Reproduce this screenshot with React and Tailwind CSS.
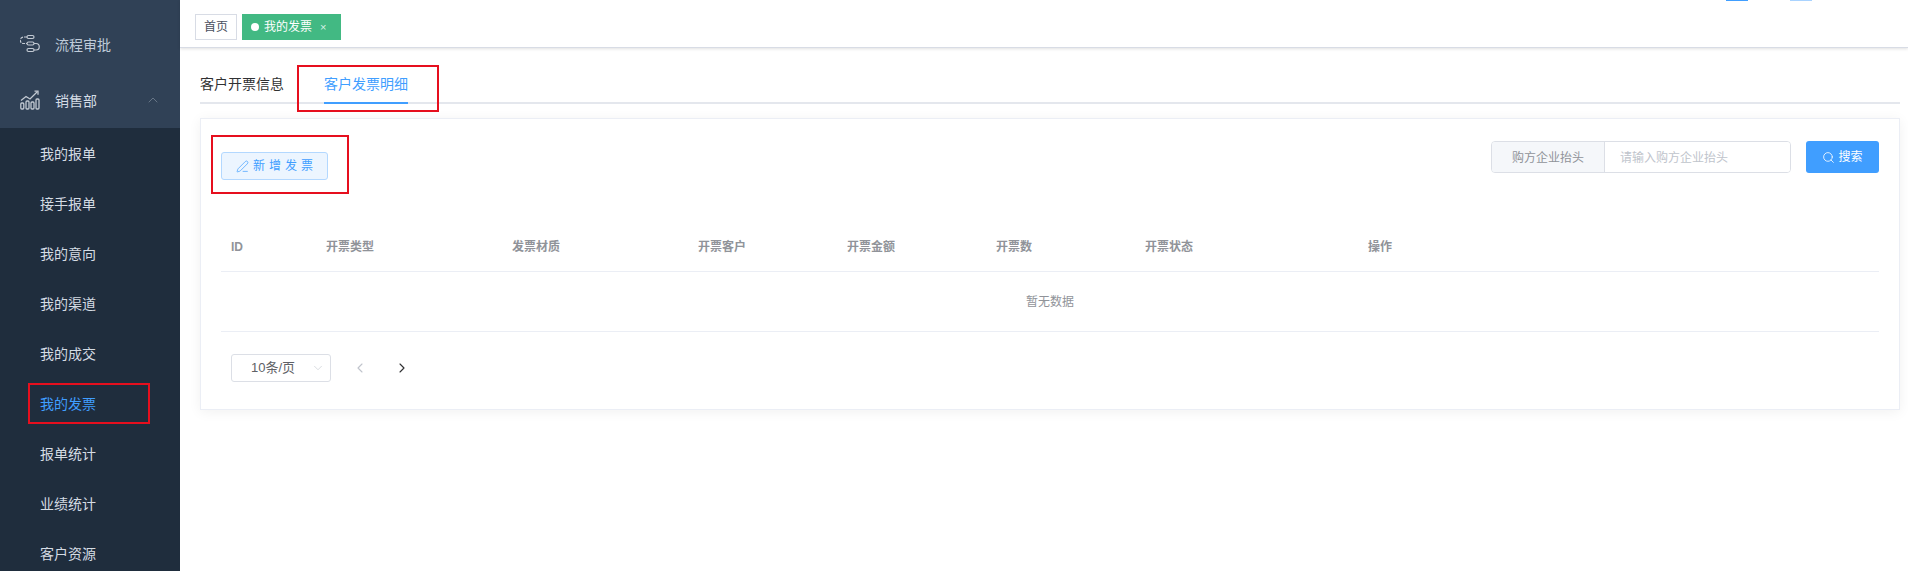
import React from "react";
import { ChevronUp, ChevronDown, ChevronLeft, ChevronRight, PenLine, Search } from "lucide-react";

const FONT = { fontFamily: '"Liberation Sans", "Noto Sans CJK SC", sans-serif' };

function Annot({ className }) {
  return <div className={"absolute border-2 border-[#e60f1e] pointer-events-none " + className} />;
}

function FlowIcon() {
  return (
    <svg width="20" height="20" viewBox="0 0 20 20" fill="none" stroke="#c3cad3" strokeWidth="1.2" className="shrink-0">
      <rect x="7" y="1.5" width="7" height="3" rx="1.5" />
      <rect x="7" y="8" width="7" height="3" rx="1.5" />
      <rect x="7" y="14.5" width="7" height="3" rx="1.5" />
      <path d="M7 3H3.5a2.5 2.5 0 0 0 0 6.5H7" strokeDasharray="3 1" />
      <path d="M14 9.5h2a2.5 2.5 0 0 1 0 6.5h-2" />
    </svg>
  );
}

function ChartIcon() {
  return (
    <svg width="20" height="20" viewBox="0 0 20 20" fill="none" stroke="#c3cad3" strokeWidth="1.3" className="shrink-0">
      <rect x="0.8" y="13" width="3" height="6" rx="1" />
      <rect x="6" y="11" width="3" height="8" rx="1" />
      <rect x="11" y="12" width="3" height="7" rx="1" />
      <rect x="16" y="9" width="3" height="10" rx="1" />
      <path d="M1 10.5 6 6.5l4 2.5 7.5-7.5" />
      <path d="M14.5 1.2h3.5v3.5" />
    </svg>
  );
}

const SUB = ["我的报单", "接手报单", "我的意向", "我的渠道", "我的成交", "我的发票", "报单统计", "业绩统计", "客户资源"];

function Sidebar() {
  return (
    <aside className="w-[180px] h-[571px] shrink-0 bg-[#304156] overflow-hidden pt-[16px]">
      <div className="h-[56px] flex items-center pl-[20px] text-[14px] text-[#bfcbd9]">
        <FlowIcon />
        <span className="ml-[15px] pt-[2px]">流程审批</span>
      </div>
      <div className="h-[56px] flex items-center pl-[20px] pr-[19px] text-[14px] text-[#d5dde6]">
        <ChartIcon />
        <span className="ml-[15px] pt-[2px]">销售部</span>
        <ChevronUp size={16} strokeWidth={1.1} className="ml-auto text-[#7c8998]" />
      </div>
      <div className="bg-[#1f2d3d] h-[443px]">
        {SUB.map((s) => {
          const active = s === "我的发票";
          return (
            <div
              key={s}
              className={"relative h-[50px] flex items-center pl-[40px] pt-[2px] text-[14px] " + (active ? "text-[#409eff]" : "text-[#d5dce4]")}
            >
              {s}
              {active && <Annot className="left-[28px] top-[5px] w-[122px] h-[41px]" />}
            </div>
          );
        })}
      </div>
    </aside>
  );
}

function Header() {
  return (
    <header className="relative h-[48px] bg-white border-b border-[#d8dce5] shadow-[0_1px_3px_0_rgba(0,0,0,0.12)] flex items-start pt-[14px] pl-[15px] gap-[5px]">
      <span className="h-[26px] w-[42px] border border-[#d8dce5] bg-white text-[#495060] text-[12px] flex items-center justify-center">首页</span>
      <span className="h-[26px] w-[99px] bg-[#42b983] text-white text-[12px] flex items-center pl-[9px]">
        <span className="w-[8px] h-[8px] rounded-full bg-white mr-[5px]" />
        我的发票
        <span className="ml-[8px] text-[11px] text-[#d8f0e5]">×</span>
      </span>
      <div className="absolute right-[160px] top-0 w-[22px] h-[1px] bg-[#409eff]" />
      <div className="absolute right-[96px] top-0 w-[22px] h-[1px] bg-[#a9d3ff]" />
    </header>
  );
}

function Tabs() {
  return (
    <div className="flex h-[40px] border-b-2 border-[#e4e7ed] text-[14px] relative">
      <div className="h-[40px] flex items-center text-[#303133] mr-[40px]">客户开票信息</div>
      <div className="relative h-[40px] flex items-center text-[#409eff]">
        客户发票明细
        <div className="absolute left-0 right-0 bottom-0 h-[2px] bg-[#409eff]" />
        <Annot className="left-[-27px] top-[1px] w-[142px] h-[47px]" />
      </div>
    </div>
  );
}

const COLS = [
  ["ID", "w-[95px]"],
  ["开票类型", "w-[186px]"],
  ["发票材质", "w-[186px]"],
  ["开票客户", "w-[149px]"],
  ["开票金额", "w-[149px]"],
  ["开票数", "w-[149px]"],
  ["开票状态", "w-[223px]"],
  ["操作", "flex-1"],
];

function Card() {
  return (
    <div className="mt-[14px] h-[292px] border border-[#ebeef5] bg-white shadow-[0_2px_12px_0_rgba(0,0,0,0.06)] px-[20px]">
      <div className="flex items-start justify-between h-[86px]">
        <div className="relative mt-[33px]">
          <button className="h-[28px] w-[107px] rounded-[3px] border border-[#b3d8ff] bg-[#ecf5ff] text-[#409eff] text-[12px] tracking-[4px] flex items-center justify-center pl-[4px]">
            <PenLine size={13} strokeWidth={1.3} className="mr-[4px] shrink-0" />
            新增发票
          </button>
          <Annot className="left-[-10px] top-[-17px] w-[138px] h-[59px]" />
        </div>
        <div className="flex mt-[22px]">
          <div className="flex h-[32px] w-[300px] rounded-[4px] border border-[#dcdfe6] text-[12px] overflow-hidden">
            <div className="w-[113px] bg-[#f5f7fa] border-r border-[#dcdfe6] text-[#909399] flex items-center justify-center pt-[1px]">购方企业抬头</div>
            <div className="flex-1 bg-white text-[#c0c4cc] flex items-center pl-[15px] pt-[1px]">请输入购方企业抬头</div>
          </div>
          <button className="ml-[15px] h-[32px] w-[73px] rounded-[3px] bg-[#409eff] text-white text-[12px] flex items-center justify-center">
            <Search size={13} strokeWidth={1.5} className="mr-[3px]" />
            搜索
          </button>
        </div>
      </div>
      <div className="flex h-[67px] pt-[17px] items-center border-b border-[#ebeef5] text-[12px] font-bold text-[#909399]">
        {COLS.map(([t, w]) => (
          <div key={t} className={w + " pl-[10px]"}>{t}</div>
        ))}
      </div>
      <div className="h-[60px] flex items-center justify-center border-b border-[#ebeef5] text-[12px] text-[#909399]">暂无数据</div>
      <div className="flex items-center mt-[22px] pl-[10px]">
        <div className="relative h-[28px] w-[100px] rounded-[3px] border border-[#dcdfe6] text-[13px] text-[#606266] flex items-center pl-[19px]">
          10条/页
          <ChevronDown size={14} strokeWidth={1} className="absolute right-[5px] top-[6px] text-[#c0c4cc]" />
        </div>
        <ChevronLeft size={16} strokeWidth={1.7} className="ml-[21px] text-[#c0c4cc]" />
        <ChevronRight size={16} strokeWidth={1.7} className="ml-[26px] text-[#303133]" />
      </div>
    </div>
  );
}

export default function App() {
  return (
    <div style={FONT} className="flex w-[1908px] h-[571px] overflow-hidden bg-white">
      <Sidebar />
      <div className="flex-1 min-w-0">
        <Header />
        <main className="pt-[16px] pl-[20px] pr-[8px]">
          <Tabs />
          <Card />
        </main>
      </div>
    </div>
  );
}
